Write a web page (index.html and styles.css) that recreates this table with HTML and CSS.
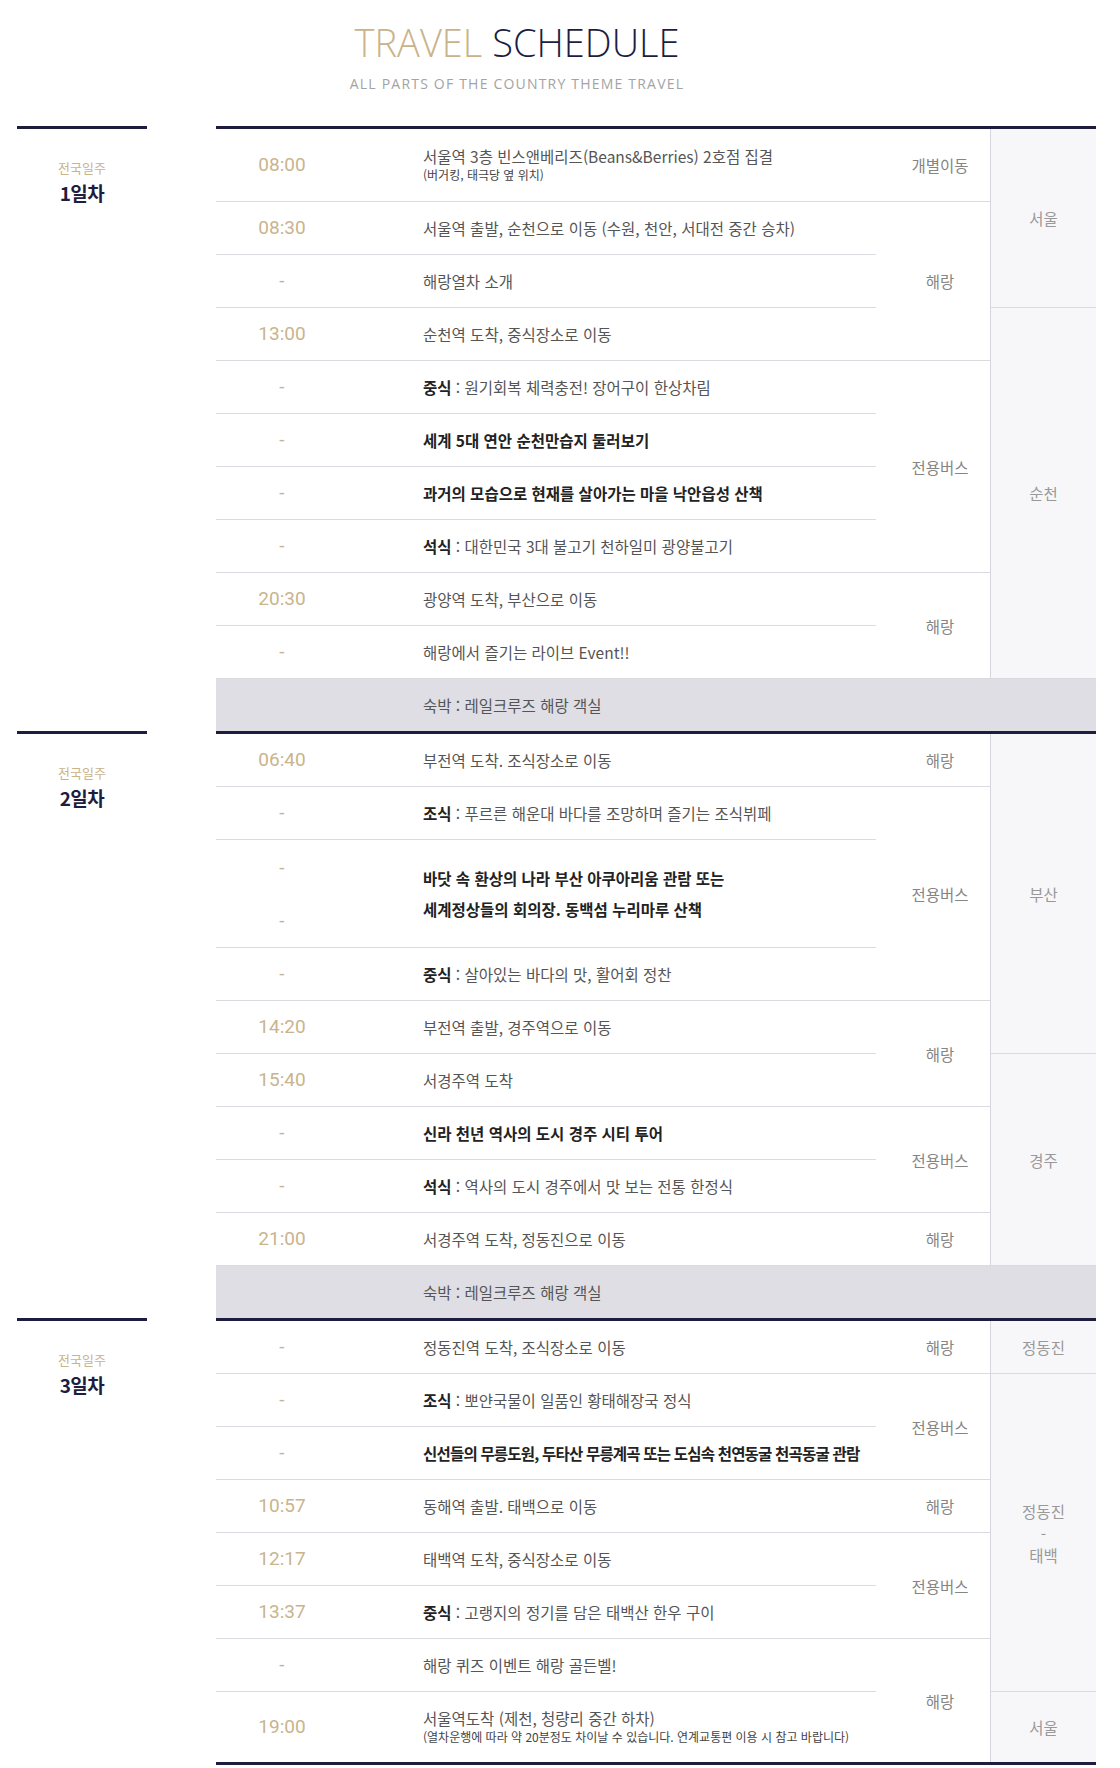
FILE: index.html
```html
<!DOCTYPE html>
<html lang="ko">
<head>
    <meta charset="UTF-8">
    <meta name="viewport" content="width=device-width, initial-scale=1.0">
    <title>Travel Schedule</title>
    <link rel="stylesheet" href="styles.css">
</head>
<body>
    <div class="wrap">
        <div class="head">
            <h1><span class="gold">TRAVEL</span> <span class="navy">SCHEDULE</span></h1>
            <p>ALL PARTS OF THE COUNTRY THEME TRAVEL</p>
        </div>

        <div class="days">
            <!-- day 1 -->
            <div class="day">
                <div class="day-label">
                    <p class="tag">전국일주</p>
                    <p class="num">1일차</p>
                </div>
                <table class="plan">
                    <colgroup><col class="c-time"><col class="c-text"><col class="c-move"><col class="c-place"></colgroup>
                    <tr class="tall">
                        <td class="time">08:00</td>
                        <td class="text">서울역 3층 빈스앤베리즈(Beans&amp;Berries) 2호점 집결<span class="sub">(버거킹, 태극당 옆 위치)</span></td>
                        <td class="move">개별이동</td>
                        <td class="place" rowspan="3">서울</td>
                    </tr>
                    <tr>
                        <td class="time">08:30</td>
                        <td class="text">서울역 출발, 순천으로 이동 (수원, 천안, 서대전 중간 승차)</td>
                        <td class="move" rowspan="3">해랑</td>
                    </tr>
                    <tr>
                        <td class="time">-</td>
                        <td class="text">해랑열차 소개</td>
                    </tr>
                    <tr>
                        <td class="time">13:00</td>
                        <td class="text">순천역 도착, 중식장소로 이동</td>
                        <td class="place" rowspan="7">순천</td>
                    </tr>
                    <tr>
                        <td class="time">-</td>
                        <td class="text"><b>중식</b> : 원기회복 체력충전! 장어구이 한상차림</td>
                        <td class="move" rowspan="4">전용버스</td>
                    </tr>
                    <tr>
                        <td class="time">-</td>
                        <td class="text"><b>세계 5대 연안 순천만습지 둘러보기</b></td>
                    </tr>
                    <tr>
                        <td class="time">-</td>
                        <td class="text"><b>과거의 모습으로 현재를 살아가는 마을 낙안읍성 산책</b></td>
                    </tr>
                    <tr>
                        <td class="time">-</td>
                        <td class="text"><b>석식</b> : 대한민국 3대 불고기 천하일미 광양불고기</td>
                    </tr>
                    <tr>
                        <td class="time">20:30</td>
                        <td class="text">광양역 도착, 부산으로 이동</td>
                        <td class="move" rowspan="2">해랑</td>
                    </tr>
                    <tr>
                        <td class="time">-</td>
                        <td class="text">해랑에서 즐기는 라이브 Event!!</td>
                    </tr>
                    <tr class="stay">
                        <td></td>
                        <td class="text" colspan="3">숙박 : 레일크루즈 해랑 객실</td>
                    </tr>
                </table>
            </div>

            <!-- day 2 -->
            <div class="day">
                <div class="day-label">
                    <p class="tag">전국일주</p>
                    <p class="num">2일차</p>
                </div>
                <table class="plan">
                    <colgroup><col class="c-time"><col class="c-text"><col class="c-move"><col class="c-place"></colgroup>
                    <tr>
                        <td class="time">06:40</td>
                        <td class="text">부전역 도착. 조식장소로 이동</td>
                        <td class="move">해랑</td>
                        <td class="place" rowspan="5">부산</td>
                    </tr>
                    <tr>
                        <td class="time">-</td>
                        <td class="text"><b>조식</b> : 푸르른 해운대 바다를 조망하며 즐기는 조식뷔페</td>
                        <td class="move" rowspan="3">전용버스</td>
                    </tr>
                    <tr class="double">
                        <td class="time">-<br>-</td>
                        <td class="text"><b>바닷 속 환상의 나라 부산 아쿠아리움 관람 또는<br>세계정상들의 회의장. 동백섬 누리마루 산책</b></td>
                    </tr>
                    <tr>
                        <td class="time">-</td>
                        <td class="text"><b>중식</b> : 살아있는 바다의 맛, 활어회 정찬</td>
                    </tr>
                    <tr>
                        <td class="time">14:20</td>
                        <td class="text">부전역 출발, 경주역으로 이동</td>
                        <td class="move" rowspan="2">해랑</td>
                    </tr>
                    <tr>
                        <td class="time">15:40</td>
                        <td class="text">서경주역 도착</td>
                        <td class="place" rowspan="4">경주</td>
                    </tr>
                    <tr>
                        <td class="time">-</td>
                        <td class="text"><b>신라 천년 역사의 도시 경주 시티 투어</b></td>
                        <td class="move" rowspan="2">전용버스</td>
                    </tr>
                    <tr>
                        <td class="time">-</td>
                        <td class="text"><b>석식</b> : 역사의 도시 경주에서 맛 보는 전통 한정식</td>
                    </tr>
                    <tr>
                        <td class="time">21:00</td>
                        <td class="text">서경주역 도착, 정동진으로 이동</td>
                        <td class="move">해랑</td>
                    </tr>
                    <tr class="stay">
                        <td></td>
                        <td class="text" colspan="3">숙박 : 레일크루즈 해랑 객실</td>
                    </tr>
                </table>
            </div>

            <!-- day 3 -->
            <div class="day">
                <div class="day-label">
                    <p class="tag">전국일주</p>
                    <p class="num">3일차</p>
                </div>
                <table class="plan last">
                    <colgroup><col class="c-time"><col class="c-text"><col class="c-move"><col class="c-place"></colgroup>
                    <tr>
                        <td class="time">-</td>
                        <td class="text">정동진역 도착, 조식장소로 이동</td>
                        <td class="move">해랑</td>
                        <td class="place">정동진</td>
                    </tr>
                    <tr>
                        <td class="time">-</td>
                        <td class="text"><b>조식</b> : 뽀얀국물이 일품인 황태해장국 정식</td>
                        <td class="move" rowspan="2">전용버스</td>
                        <td class="place stack" rowspan="6">정동진<br>-<br>태백</td>
                    </tr>
                    <tr>
                        <td class="time">-</td>
                        <td class="text tight"><b>신선들의 무릉도원, 두타산 무릉계곡 또는 도심속 천연동굴 천곡동굴 관람</b></td>
                    </tr>
                    <tr>
                        <td class="time">10:57</td>
                        <td class="text">동해역 출발. 태백으로 이동</td>
                        <td class="move">해랑</td>
                    </tr>
                    <tr>
                        <td class="time">12:17</td>
                        <td class="text">태백역 도착, 중식장소로 이동</td>
                        <td class="move" rowspan="2">전용버스</td>
                    </tr>
                    <tr>
                        <td class="time">13:37</td>
                        <td class="text"><b>중식</b> : 고랭지의 정기를 담은 태백산 한우 구이</td>
                    </tr>
                    <tr>
                        <td class="time">-</td>
                        <td class="text">해랑 퀴즈 이벤트 해랑 골든벨!</td>
                        <td class="move end" rowspan="2">해랑</td>
                    </tr>
                    <tr class="tall-end">
                        <td class="time end">19:00</td>
                        <td class="text end">서울역도착 (제천, 청량리 중간 하차)<span class="sub">(열차운행에 따라 약 20분정도 차이날 수 있습니다. 연계교통편 이용 시 참고 바랍니다)</span></td>
                        <td class="place end">서울</td>
                    </tr>
                </table>
            </div>
        </div>
    </div>
</body>
</html>
```

FILE: styles.css
```css
body {
    margin: 0;
    background: #ffffff;
    font-family: "Noto Sans CJK KR", sans-serif;
}
.wrap {
    padding: 0 24px 0 17px;
}
.head {
    width: 1000px;
    text-align: center;
}
.head h1 {
    margin: 0;
    padding-top: 23px;
    font-family: "Open Sans", sans-serif;
    font-weight: 300;
    font-size: 38px;
    line-height: 38px;
}
.head .gold {
    color: #c9b38b;
}
.head .navy {
    color: #1d1d40;
}
.head p {
    margin: 16px 0 0;
    font-family: "Open Sans", sans-serif;
    font-size: 14px;
    line-height: 14px;
    letter-spacing: 1.2px;
    color: #a3a3a3;
}
.days {
    margin-top: 35px;
}
.day {
    display: flex;
    align-items: flex-start;
}
.day-label {
    width: 130px;
    margin-right: 69px;
    padding-top: 30px;
    border-top: 3px solid #1d1d3f;
    text-align: center;
}
.day-label .tag {
    margin: 0;
    font-size: 13px;
    line-height: 18px;
    color: #c9b38b;
}
.day-label .num {
    margin: 4px 0 0;
    font-size: 19px;
    line-height: 24px;
    font-weight: 700;
    letter-spacing: -0.5px;
    color: #1d1d3f;
}
.plan {
    width: 880px;
    table-layout: fixed;
    border-collapse: separate;
    border-spacing: 0;
    border-top: 3px solid #1d1d3f;
}
.plan.last {
    border-bottom: 3px solid #1d1d3f;
}
.c-time { width: 132px; }
.c-text { width: 528px; }
.c-move { width: 114px; }
.c-place { width: 106px; }
.plan td {
    box-sizing: border-box;
    height: 53px;
    padding: 0;
    border-bottom: 1px solid #dadae1;
    vertical-align: middle;
    font-size: 15.5px;
    line-height: 20px;
    color: #555555;
}
.plan td.time {
    text-align: center;
    font-family: Roboto, sans-serif;
    font-size: 19px;
    color: #c9b48e;
}
.plan td.text {
    padding-left: 75px;
}
.plan td.text b {
    font-weight: 700;
    color: #222222;
}
.plan td.tight {
    letter-spacing: -0.8px;
}
.plan td.move {
    padding-left: 14px;
    text-align: center;
    color: #858585;
}
.plan td.place {
    text-align: center;
    color: #999999;
    background: #f7f7fa;
    border-left: 1px solid #d6d6de;
}
.plan td.stack {
    line-height: 22px;
}
.plan .sub {
    display: block;
    font-size: 12px;
    line-height: 18px;
    color: #444444;
}
.plan tr.tall td {
    height: 73px;
}
.plan tr.double td {
    height: 108px;
}
.plan tr.double td.time {
    line-height: 53px;
}
.plan tr.double td.text {
    line-height: 31px;
}
.plan tr.tall-end td {
    height: 70px;
}
.plan td.end {
    border-bottom: 0;
}
.plan tr.stay td {
    height: 52px;
    border-bottom: 0;
    background: #dedee4;
    color: #555555;
}
```
